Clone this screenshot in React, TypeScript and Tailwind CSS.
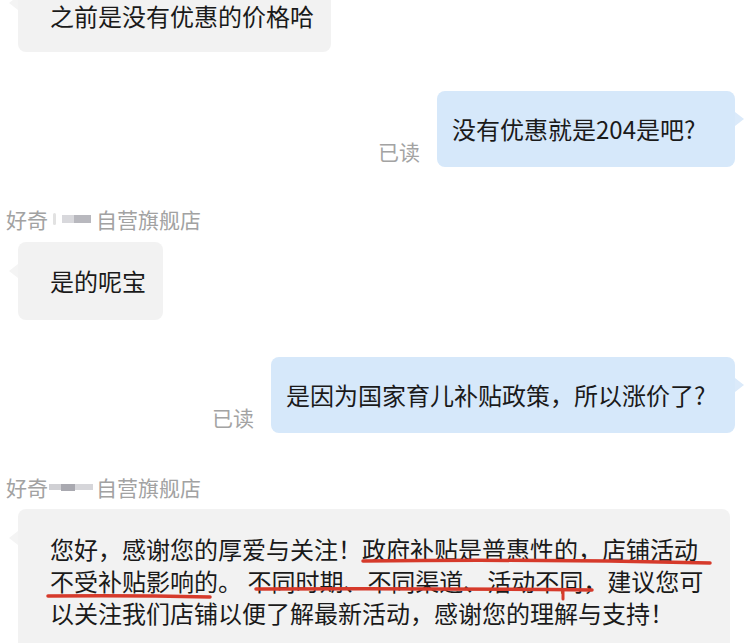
import React from 'react';

const GRAY = 'bg-[#f2f2f2]';

function LeftTail({ top = 'top-[22px]' }: { top?: string }) {
  return (
    <span className={`absolute left-[-9px] ${top} h-0 w-0 border-y-[7px] border-r-[9px] border-y-transparent border-r-[#f4f4f4]`} />
  );
}

function RightTail() {
  return (
    <span className="absolute right-[-9px] top-[21px] h-0 w-0 border-y-[7px] border-l-[9px] border-y-transparent border-l-[#dbeafa]" />
  );
}

function ShopName({ variant }: { variant: 1 | 2 }) {
  return (
    <div className="ml-[6px] flex items-center text-[21px] leading-7 text-[#a2a2a2]">
      <span>好奇</span>
      {variant === 1 ? (
        <span className="mx-[3px] flex h-7 w-[42px] items-center">
          <span className="ml-[2px] h-[12px] w-[3px] rounded-sm bg-[#e2e2e2]" />
          <span className="ml-[6px] h-[8px] w-[12px] bg-[#d8d8dc]" />
          <span className="h-[8px] w-[17px] bg-[#b8b8be]" />
        </span>
      ) : (
        <span className="mx-[1px] flex h-7 w-[46px] items-center">
          <span className="h-[6px] w-[12px] bg-[#d0d0d4]" />
          <span className="h-[7px] w-[14px] bg-[#a9a9b0]" />
          <span className="h-[6px] w-[18px] bg-[#d6d6da]" />
        </span>
      )}
      <span>自营旗舰店</span>
    </div>
  );
}

function Sent({ text, width }: { text: string; width: string }) {
  return (
    <div className="flex items-end justify-end gap-[17px] pr-[15px]">
      <span className="mb-[2px] text-[21px] leading-7 text-[#a3a3a3]">已读</span>
      <div className={`relative rounded-lg bg-[#d6e8fa] py-[22px] pl-[15px] leading-8 ${width}`}>
        {text}
        <RightTail />
      </div>
    </div>
  );
}

export default function App() {
  return (
    <div className="h-[643px] w-[750px] overflow-hidden bg-white font-['Noto_Sans_CJK_SC',sans-serif] text-[24px] text-[#1a1a1a]">
      <div className="flex flex-col">
        {/* first reply, its top is off screen */}
        <div className={`relative ml-[18px] self-start rounded-b-lg ${GRAY} pt-[3px] pb-[23px] pl-8 pr-[17px] leading-[26px]`}>
          之前是没有优惠的价格哈
          <LeftTail top="top-[-4px]" />
        </div>

        <div className="mt-[39px]">
          <Sent text="没有优惠就是204是吧?" width="w-[298px]" />
        </div>

        <div className="mt-[38px]">
          <ShopName variant={1} />
        </div>

        <div className={`relative mt-[9px] ml-[18px] self-start rounded-lg ${GRAY} py-[23px] pl-8 pr-[17px] leading-8`}>
          是的呢宝
          <LeftTail />
        </div>

        <div className="mt-[37px]">
          <Sent text="是因为国家育儿补贴政策，所以涨价了?" width="w-[464px]" />
        </div>

        <div className="mt-[40px]">
          <ShopName variant={2} />
        </div>

        <div className={`relative mt-[8px] ml-[18px] w-[712px] rounded-lg ${GRAY} pt-6 pb-6 pl-8 leading-8`}>
          <div className="whitespace-nowrap">您好，感谢您的厚爱与关注！政府补贴是普惠性的，店铺活动</div>
          <div className="whitespace-nowrap">不受补贴影响的。 不同时期、不同渠道、活动不同，建议您可</div>
          <div className="whitespace-nowrap">以关注我们店铺以便了解最新活动，感谢您的理解与支持！</div>
          <LeftTail />

          {/* hand drawn red marks */}
          <svg className="pointer-events-none absolute left-0 top-0" width="712" height="133" viewBox="0 0 712 133" fill="none">
            <path d="M345 52 Q520 50 692 54" stroke="#d63a2b" strokeWidth="3.5" strokeLinecap="round" />
            <path d="M30 87 Q110 86 192 88" stroke="#d63a2b" strokeWidth="3.5" strokeLinecap="round" />
            <path d="M238 80 Q400 79 574 81" stroke="#d63a2b" strokeWidth="3.5" strokeLinecap="round" />
            <path d="M545 81 L545 90" stroke="#d63a2b" strokeWidth="3" strokeLinecap="round" />
          </svg>
        </div>
      </div>
    </div>
  );
}
